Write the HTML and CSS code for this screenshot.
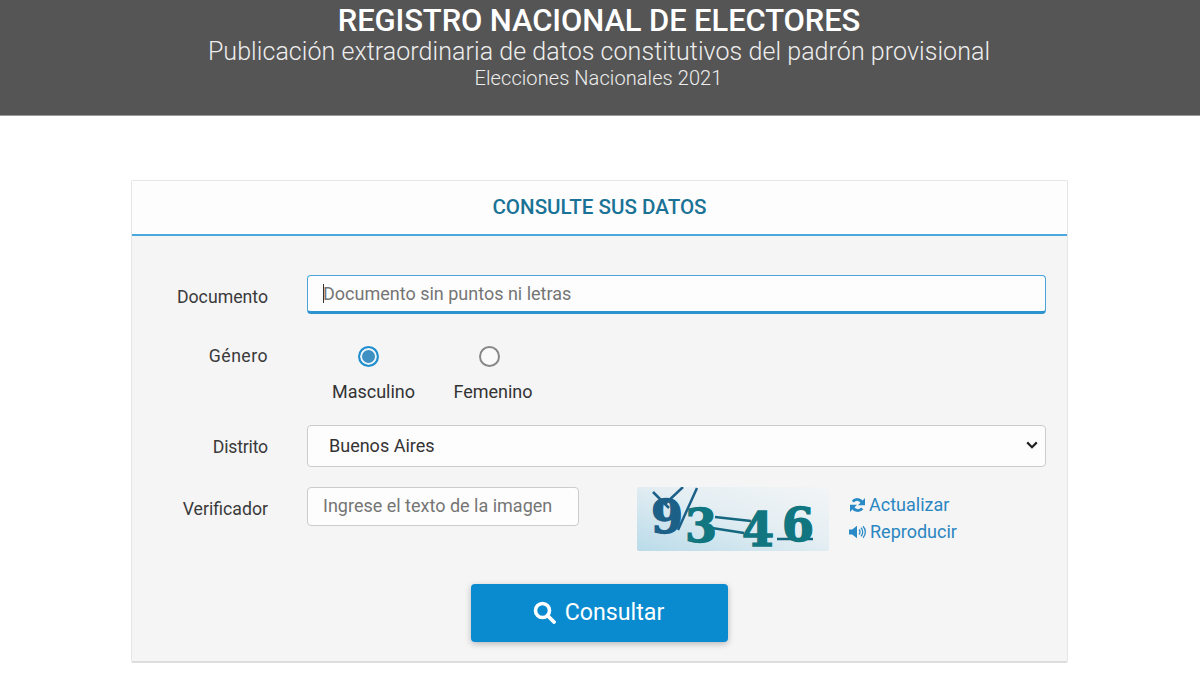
FILE: index.html
```html
<!DOCTYPE html>
<html lang="es">
<head>
<meta charset="utf-8">
<title>Registro Nacional de Electores</title>
<link rel="stylesheet" href="styles.css">
</head>
<body>
<header class="banner">
  <h1 class="banner-title">REGISTRO NACIONAL DE ELECTORES</h1>
  <p class="banner-sub">Publicación extraordinaria de datos constitutivos del padrón provisional</p>
  <p class="banner-note">Elecciones Nacionales 2021</p>
</header>
<main class="panel">
  <h2 class="panel-head">CONSULTE SUS DATOS</h2>
  <form class="panel-body">
    <div class="row row-doc">
      <label class="label label-doc">Documento</label>
      <div class="field field-focus"><span class="caret"></span><span class="placeholder">Documento sin puntos ni letras</span></div>
    </div>
    <div class="row row-gender">
      <span class="label label-gender">Género</span>
      <div class="radios">
        <div class="radio-opt opt-m"><span class="radio radio-on"></span><span class="radio-text">Masculino</span></div>
        <div class="radio-opt opt-f"><span class="radio"></span><span class="radio-text">Femenino</span></div>
      </div>
    </div>
    <div class="row row-dist">
      <label class="label label-dist">Distrito</label>
      <div class="field field-select"><span class="select-value">Buenos Aires</span>
        <svg class="chevron" width="12" height="8" viewBox="0 0 12 8"><path d="M1.2 1.400 6 6.200l4.800-4.800" fill="none" stroke="#222" stroke-width="2.200"/></svg>
      </div>
    </div>
    <div class="row row-ver">
      <label class="label label-ver">Verificador</label>
      <div class="field field-small"><span class="placeholder">Ingrese el texto de la imagen</span></div>
      <svg class="captcha" width="192" height="76" viewBox="0 0 192 76">
        <defs><linearGradient id="cg" x1="0" y1="1" x2="1" y2="0"><stop offset="0" stop-color="#b9dbe9"/><stop offset=".55" stop-color="#e4eef3"/><stop offset="1" stop-color="#f3f5f6"/></linearGradient></defs>
        <rect width="192" height="64" rx="2" fill="url(#cg)"/>
        <path d="M16 5l16 16M46 0 28 17M60 1 41 43" stroke="#1c6088" stroke-width="2.500" fill="none"/>
        <path d="M78 30l36 4M75 41l32 5M140 52h36" stroke="#14677f" stroke-width="2.500" fill="none"/>
        <text class="cap-a" x="14" y="46">9</text>
        <text class="cap-b" x="48" y="55">3</text>
        <text class="cap-b" x="105" y="59">4</text>
        <text class="cap-b" x="145" y="54">6</text>
      </svg>
      <div class="cap-links">
        <a class="cap-link"><svg width="17" height="16" viewBox="0 0 17 16"><path d="M13.500 6.200A5.600 5.600 0 0 0 3.800 4.600M3.500 9.800a5.600 5.600 0 0 0 9.700 1.600" fill="none" stroke="#2a8ac6" stroke-width="2.800"/><path d="M16 1v7.200H9zM1 15V7.800h7z" fill="#2a8ac6"/></svg>Actualizar</a>
        <a class="cap-link link-audio"><svg width="18" height="14" viewBox="0 0 18 14"><path d="M0 4.500h3.200L8 .8v12.400L3.200 9.500H0z" fill="#2a8ac6"/><path d="M10 4.500a3.500 3.500 0 0 1 0 5M12 2.800a6 6 0 0 1 0 8.400M14 1.200a8.400 8.400 0 0 1 0 11.600" fill="none" stroke="#2a8ac6" stroke-width="1.300"/></svg>Reproducir</a>
      </div>
    </div>
    <div class="actions">
      <button class="submit" type="button">
        <svg width="23" height="23" viewBox="0 0 23 23"><circle cx="9.500" cy="9.500" r="7" fill="none" stroke="#fff" stroke-width="3.600"/><path d="M14.500 14.500 21 21" stroke="#fff" stroke-width="3.800" stroke-linecap="round"/></svg>
        Consultar
      </button>
    </div>
  </form>
</main>
</body>
</html>
```
FILE: styles.css
```css
* { box-sizing: border-box; }
html, body { margin: 0; height: 675px; overflow: hidden; }
body { background: #fff; font-family: Roboto, "Liberation Sans", sans-serif; color: #333; }

.banner { height: 116px; background: #555; border-bottom: 1px solid #999; text-align: center; color: #fff; margin-bottom: 64px; padding: 4px 2px 0 0; overflow: hidden; }
.banner-title { margin: 0; font-size: 31px; line-height: 33px; font-weight: 500; letter-spacing: -.12px; }
.banner-sub { margin: 0; font-size: 25px; line-height: 29px; font-weight: 300; color: #eee; letter-spacing: .06px; }
.banner-note { margin: 0 1px 0 0; font-size: 20px; line-height: 25px; font-weight: 300; color: #eee; letter-spacing: .08px; }

.panel { width: 937px; height: 483px; margin-left: 131px; background: #f5f5f6; border: 1px solid #e6e6e6; border-bottom: 2px solid #ddd; border-radius: 2px; }
.panel-head { margin: 0; height: 55px; background: #fdfdfd; border-bottom: 2px solid #4aa8de; text-align: center; font-size: 20.6px; line-height: 52px; font-weight: 500; color: #1a7396; }
.panel-body { padding: 39px 21px 0 0; }

.row { display: flex; align-items: flex-start; }
.label { width: 136px; flex: none; margin-right: 39px; text-align: right; font-size: 17.700px; line-height: 20px; color: #3a3a3a; }
.label-doc { padding-top: 12px; }
.label-gender { padding-top: 6px; letter-spacing: .45px; }
.label-dist { padding-top: 12px; letter-spacing: -.2px; }
.label-ver { padding-top: 12px; }

.field { background: #fdfdfd; border: 1px solid #ccc; border-radius: 4px; font-size: 18px; display: flex; align-items: center; }
.field-focus { flex: 1; height: 39px; border: 1px solid #4aa5d8; border-bottom: 3px solid #2f93cf; padding-left: 15px; position: relative; }
.caret { position: absolute; left: 15px; top: 8px; width: 1px; height: 19px; background: #333; }
.placeholder { color: #757575; }
.field-select { flex: 1; height: 42px; padding: 0 7px 2px 21px; justify-content: space-between; color: #333; }
.chevron { flex: none; }
.field-small { width: 272px; height: 39px; padding: 0 0 2px 15px; flex: none; }

.row-gender { margin-top: 26px; height: 85px; }
.radios { display: flex; }
.radio-opt { display: flex; flex-direction: column; align-items: center; font-size: 18px; color: #333; }
.opt-m { width: 83px; margin-left: 25px; }
.opt-f { width: 80px; margin-left: 38px; }
.radio { width: 21px; height: 21px; border-radius: 50%; border: 2px solid #888; background: #fafafa; margin: 6px 0 15px; }
.radio-on { border-color: #1f8fd0; background: #3f90c2; box-shadow: inset 0 0 0 2px #eef5fa; }
.radio-text { line-height: 20px; }
.opt-m .radio { transform: translateX(-5px); }
.opt-f .radio { transform: translateX(-4px); }

.row-ver { margin-top: 20px; height: 97px; }
.captcha { flex: none; margin-left: 58px; }
.cap-a, .cap-b { font-family: "DejaVu Serif", serif; font-weight: 700; font-size: 46px; stroke-width: 1.400px; }
.cap-a { fill: #1c6088; stroke: #1c6088; }
.cap-b { fill: #11767f; stroke: #11767f; }
.cap-links { margin-left: 20px; margin-top: 8px; display: flex; flex-direction: column; gap: 7px; font-size: 18px; color: #2a86c0; }
.cap-link { display: flex; align-items: center; gap: 3px; line-height: 20px; }

.actions { display: flex; justify-content: center; padding-left: 21px; }
.submit { width: 257px; height: 58px; background: #0a8bd0; border: 0; border-radius: 4px; color: #fff; font-family: Roboto, sans-serif; font-size: 23.200px; font-weight: 400; display: flex; align-items: center; justify-content: center; gap: 9px; padding: 0 2px 2px 0; box-shadow: 0 2px 6px rgba(0,0,0,.25); }
```
